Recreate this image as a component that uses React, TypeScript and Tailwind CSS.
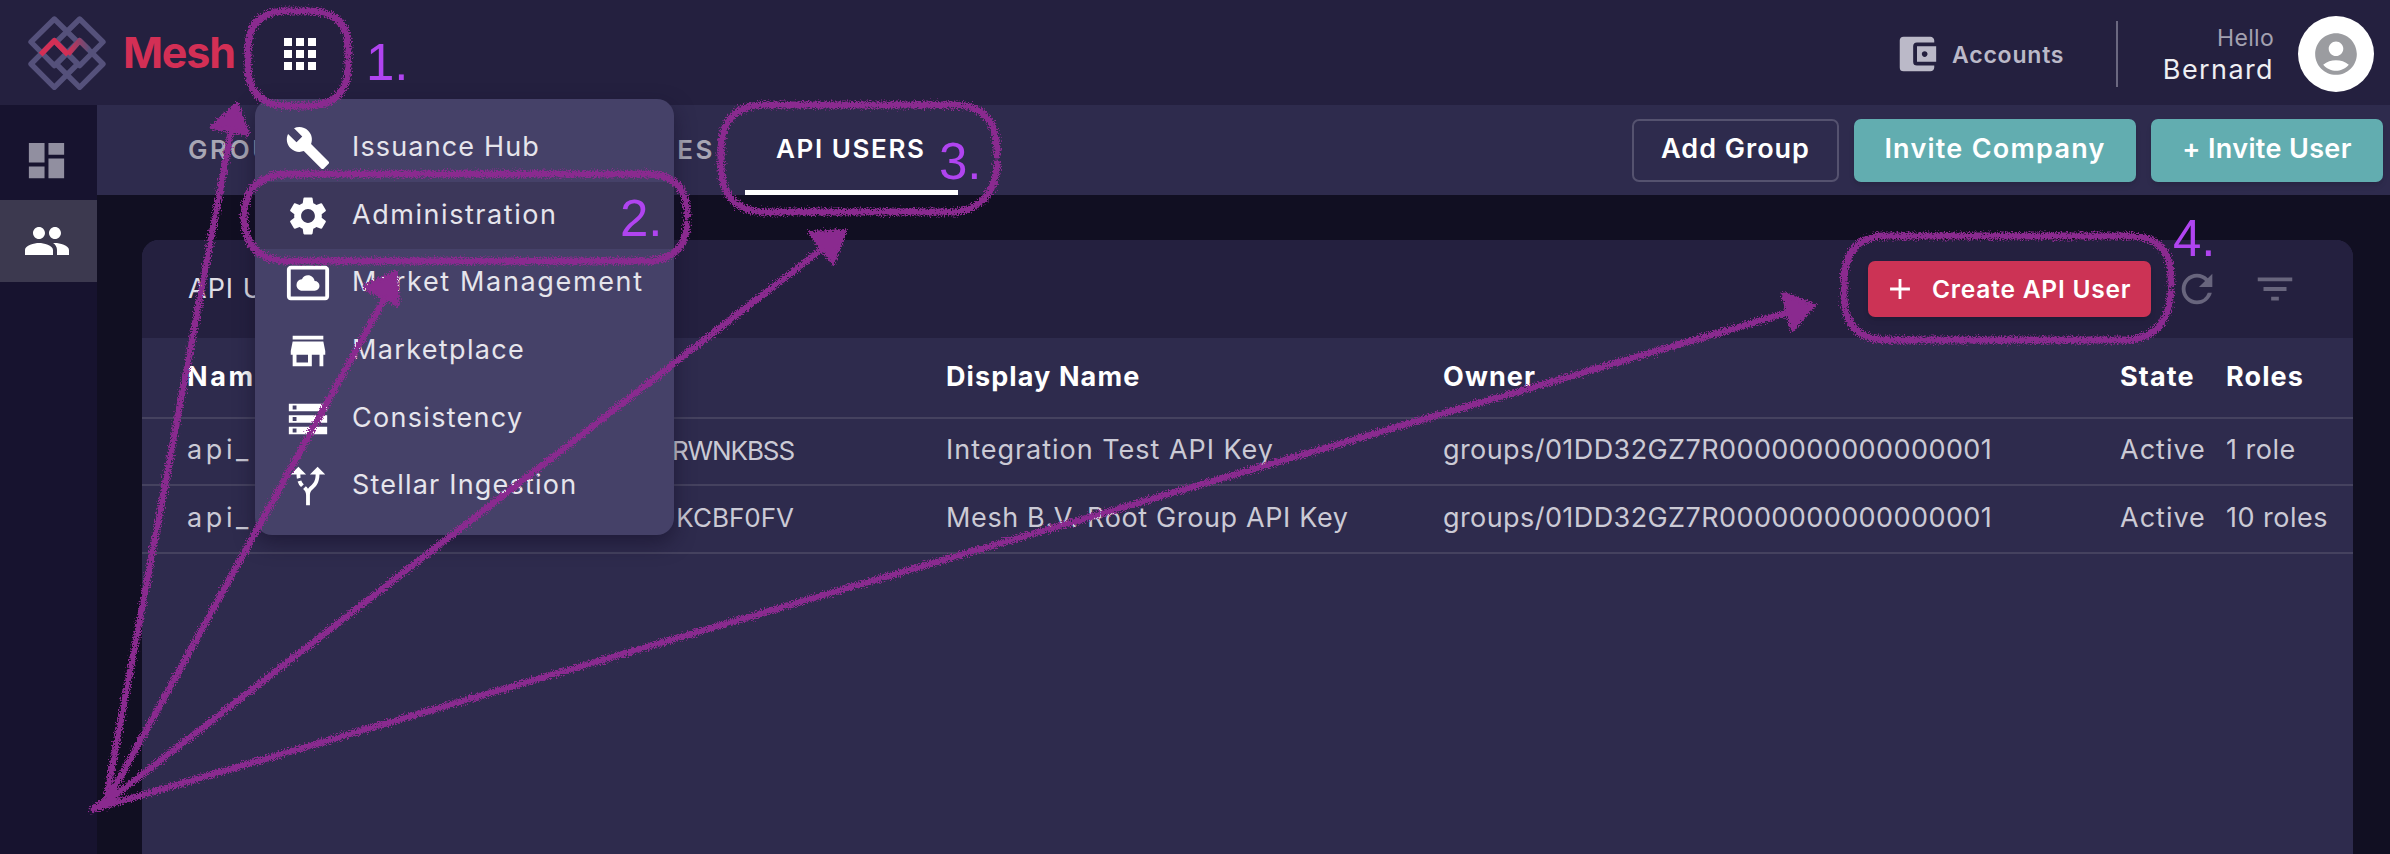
import type { IconType } from "react-icons";
import {
  MdAccountBalanceWallet,
  MdAccountCircle,
  MdAdd,
  MdAltRoute,
  MdApps,
  MdBuild,
  MdDashboard,
  MdFilterList,
  MdPeople,
  MdRefresh,
  MdSettings,
  MdSettingsSystemDaydream,
  MdStorage,
  MdStore,
} from "react-icons/md";

const menu: { label: string; icon: IconType; track: string; active?: boolean }[] = [
  { label: "Issuance Hub", icon: MdBuild, track: "tracking-[1.15px]" },
  { label: "Administration", icon: MdSettings, track: "tracking-[1.55px]", active: true },
  { label: "Market Management", icon: MdSettingsSystemDaydream, track: "tracking-[1.65px]" },
  { label: "Marketplace", icon: MdStore, track: "tracking-[1.35px]" },
  { label: "Consistency", icon: MdStorage, track: "tracking-[1.3px]" },
  { label: "Stellar Ingestion", icon: MdAltRoute, track: "tracking-[1.2px]" },
];

const rows = [
  {
    start: "api_",
    end: "RWNKBSS",
    endTrack: "tracking-[-1.1px]",
    name: "Integration Test API Key",
    nameTrack: "tracking-[0.98px]",
    roles: "1 role",
  },
  {
    start: "api_",
    end: "KCBF0FV",
    endTrack: "tracking-[0px]",
    name: "Mesh B.V. Root Group API Key",
    nameTrack: "tracking-[0.63px]",
    roles: "10 roles",
  },
];

const columns = "grid-cols-[759px_497px_677px_106px_1fr]";

function Logo() {
  return (
    <svg className="h-[75px] w-[78px]" viewBox="0 0 234 225" fill="none" strokeWidth="16" strokeLinejoin="round">
      <defs>
        <linearGradient id="fade" x1="120" y1="0" x2="186" y2="0" gradientUnits="userSpaceOnUse">
          <stop offset="0" stopColor="#d32f55" />
          <stop offset="1" stopColor="#55517b" />
        </linearGradient>
      </defs>
      <g stroke="#55517b">
        <path d="M79 12 9 81l70 71 70-71z" />
        <path d="M155 12 85 81l70 71 70-71z" />
        <path d="M79 217 9 147l70-70 70 70z" />
        <path d="M155 217l-70-70 70-70 70 70z" />
      </g>
      <path d="M120 118 155 77 182 103" stroke="url(#fade)" />
      <path d="M38 119 79 77 120 119" stroke="#d32f55" />
    </svg>
  );
}

function Annotations() {
  return (
    <div className="pointer-events-none absolute inset-0">
      <svg className="absolute inset-0 h-[854px] w-[2390px]" viewBox="0 0 2390 854" fill="none">
        <defs>
          <filter id="crayon" x="0" y="0" width="2390" height="854" filterUnits="userSpaceOnUse" colorInterpolationFilters="sRGB">
            <feTurbulence type="fractalNoise" baseFrequency="0.7" numOctaves="2" seed="4" result="n" />
            <feDisplacementMap in="SourceGraphic" in2="n" scale="9" xChannelSelector="R" yChannelSelector="G" />
          </filter>
        </defs>
        <g filter="url(#crayon)" stroke="#8a2a8f" strokeWidth="7" strokeLinecap="round" strokeLinejoin="round">
          <path d="M348 55V48Q348 11 308 11H287Q248 11 248 50V66Q248 106 290 106H306Q348 106 348 66V62" />
          <path d="M687 215V212Q686 174 646 174H286Q244 176 244 218Q246 260 286 261H650Q686 258 687 223" />
          <path d="M997 155V146Q994 106 956 105H762Q722 106 721 150V170Q724 210 762 212H956Q996 206 997 163" />
          <path d="M2171 284V276Q2170 237 2130 236H1882Q1844 238 1844 284V300Q1846 338 1884 340H2130Q2168 336 2171 292" />
          <path strokeWidth="6.5" d="M93 809 106 800 231 132M106 803 386 296M104 804 822 249M94 809 1786 313" />
          <g fill="#8a2a8f" strokeWidth="4">
            <path d="M237 104 212 127 248 134z" />
            <path d="M396 272 364 287 398 305z" />
            <path d="M845 231 810 233 833 263z" />
            <path d="M1814 305 1783 294 1792 330z" />
          </g>
        </g>
      </svg>
      <div className="font-['Liberation_Sans',sans-serif] text-[51px] leading-[51px] text-[#b044f0]">
        <span className="absolute left-[366px] top-[37px]">1.</span>
        <span className="absolute left-[620px] top-[193px]">2.</span>
        <span className="absolute left-[939px] top-[136px]">3.</span>
        <span className="absolute left-[2173px] top-[213px]">4.</span>
      </div>
    </div>
  );
}

export default function App() {
  return (
    <div className="relative flex h-[854px] w-[2390px] flex-col overflow-hidden whitespace-nowrap bg-[#110f22] font-['Inter',sans-serif] text-[27px] text-white">
      <header className="flex h-[105px] shrink-0 items-center bg-[#24203f] pl-[28px] pr-[16px]">
        <Logo />
        <span className="ml-[17px] w-[112px] text-[43px] font-bold tracking-[-1.2px] text-[#d32f55]">Mesh</span>
        <MdApps className="ml-[41px] mt-[3px] size-[48px]" />
        <div className="ml-auto mt-[3px] flex items-center">
          <MdAccountBalanceWallet className="size-[46px] text-[#bbb9c8]" />
          <span className="ml-[12px] mr-[2px] mt-[2px] w-[112px] text-[23px] font-semibold tracking-[0.8px] text-[#bbb9c8]">
            Accounts
          </span>
          <div className="ml-[50px] h-[66px] w-[2px] bg-[#6b6880]" />
          <div className="ml-[45px] flex w-[110px] flex-col items-end">
            <span className="-mr-[1px] text-[23px] leading-[32px] tracking-[0.3px] text-[#a3a1b0]">Hello</span>
            <span className="-mr-[1px] text-[27px] leading-[32px] tracking-[1.4px] text-[#efeff3]">Bernard</span>
          </div>
          <div className="ml-[25px] flex size-[76px] items-center justify-center rounded-full bg-white">
            <MdAccountCircle className="size-[50px] text-[#9b9ca0]" />
          </div>
        </div>
      </header>

      <div className="flex min-h-0 flex-1">
        <aside className="w-[97px] shrink-0 bg-[#17132f] pt-[14px]">
          <div className="flex h-[81px] items-center pl-[23px] pt-[2px] text-[#918fa0]">
            <MdDashboard className="size-[47px]" />
          </div>
          <div className="flex h-[82px] items-center bg-[#3c394f] pl-[23px]">
            <MdPeople className="size-[48px]" />
          </div>
        </aside>

        <main className="flex min-w-0 flex-1 flex-col">
          <nav className="flex h-[90px] shrink-0 items-center bg-[#2e2b4d] pr-[7px] font-semibold">
            <div className="ml-[91px] flex w-[527px] shrink-0 justify-between pb-[2px] text-[26px] tracking-[2.6px] text-[#a8a6b4]">
              <span>GROUPS</span>
              <span>COMPANIES</span>
            </div>
            <div className="ml-[30px] flex h-full w-[213px] items-center border-b-[5px] border-white pl-[31px] pt-[2px]">
              <span className="text-[26px] tracking-[1.6px]">API USERS</span>
            </div>
            <div className="ml-auto flex gap-[15px]">
              <button className="flex h-[63px] w-[207px] items-center justify-center rounded-[7px] border-2 border-[#55526f] pb-[2px] tracking-[1px]">
                Add Group
              </button>
              <button className="flex h-[63px] w-[282px] items-center justify-center rounded-[7px] bg-[#62adb0] pb-[2px] tracking-[1.25px] shadow-md">
                Invite Company
              </button>
              <button className="flex h-[63px] w-[232px] items-center justify-center rounded-[7px] bg-[#62adb0] pb-[2px] tracking-[0.35px] shadow-md">
                + Invite User
              </button>
            </div>
          </nav>

          <section className="ml-[45px] mr-[37px] mt-[45px] flex flex-1 flex-col rounded-t-[17px] bg-[#2e2b4d]">
            <div className="flex h-[98px] shrink-0 items-center rounded-t-[17px] bg-[#24203f] pl-[46px] pr-[55px] text-[#dfdee6]">
              <span className="tracking-[1px]">API Users</span>
              <button className="ml-auto flex h-[56px] w-[283px] items-center rounded-[7px] bg-[#cc3355] pl-[15px] font-semibold text-white shadow-md">
                <MdAdd className="size-[34px]" />
                <span className="ml-[15px] text-[24.5px] tracking-[0.8px]">Create API User</span>
              </button>
              <MdRefresh className="ml-[23px] size-[46px] text-[#68657d]" />
              <MdFilterList className="ml-[32px] size-[46px] text-[#68657d]" />
            </div>
            <div
              className={`grid h-[80.5px] shrink-0 ${columns} items-center border-b-2 border-[#45425f] pb-[1px] pl-[45px] font-bold tracking-[1.1px]`}
            >
              <span className="tracking-[2.6px]">Name</span>
              <span>Display Name</span>
              <span>Owner</span>
              <span>State</span>
              <span>Roles</span>
            </div>
            {rows.map((r) => (
              <div
                key={r.name}
                className={`grid h-[67.5px] shrink-0 ${columns} items-center border-b-2 border-[#45425f] pb-[2px] pl-[45px] text-[#cbcad5]`}
              >
                <div className="flex w-[607px] items-center justify-between">
                  <span className="tracking-[3.6px]">{r.start}</span>
                  <span className={`text-[26px] ${r.endTrack}`}>{r.end}</span>
                </div>
                <span className={r.nameTrack}>{r.name}</span>
                <span className="tracking-[0.42px]">groups/01DD32GZ7R0000000000000001</span>
                <span className="tracking-[1px]">Active</span>
                <span className="tracking-[0.5px]">{r.roles}</span>
              </div>
            ))}
          </section>
        </main>
      </div>

      <div className="absolute left-[255px] top-[99px] flex h-[436px] w-[419px] flex-col rounded-[17px] bg-[#454168] py-[15px] text-[#e6e5ec] shadow-[0_8px_20px_rgba(20,15,40,0.55)]">
        {menu.map(({ label, icon: Icon, track, active }) => (
          <div key={label} className={`flex flex-1 items-center gap-[21px] pl-[30px] ${active ? "bg-[#3c375a]" : ""}`}>
            <Icon className="size-[46px] text-white" />
            <span className={`pb-[1px] ${track}`}>{label}</span>
          </div>
        ))}
      </div>

      <Annotations />
    </div>
  );
}
